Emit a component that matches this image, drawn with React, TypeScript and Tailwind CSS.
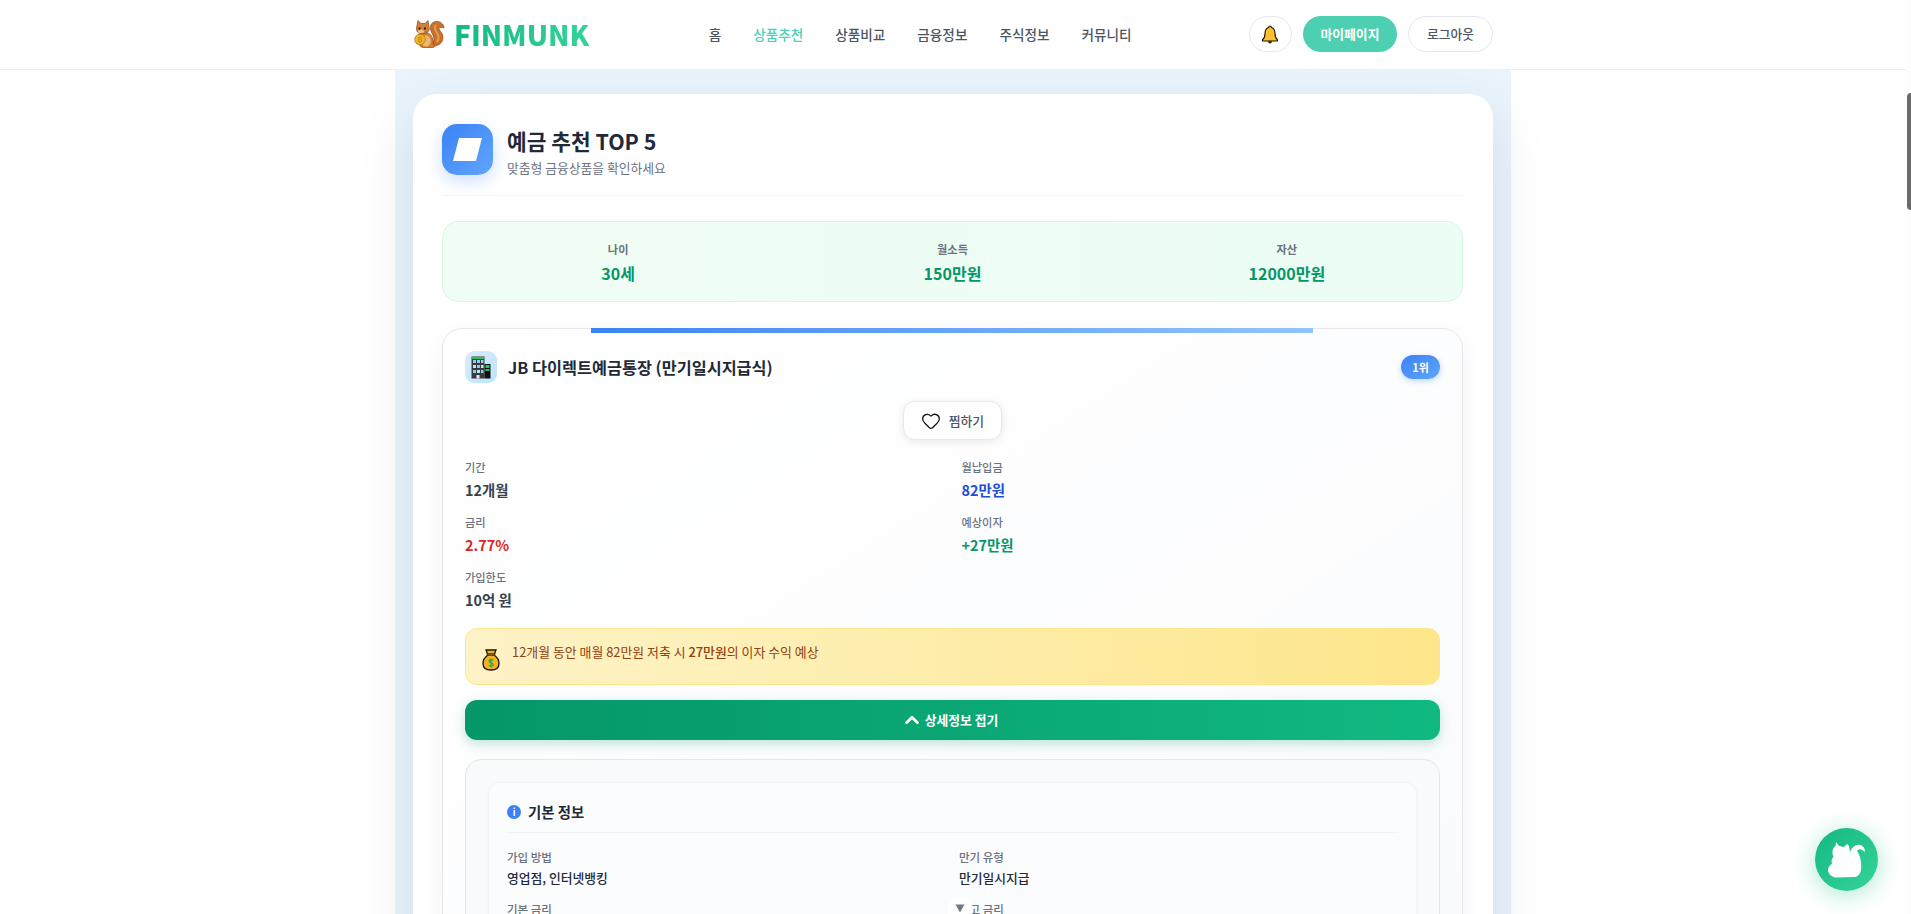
import React from "react";
import { ChevronUp, Heart } from "lucide-react";

function Squirrel() {
  return (
    <svg width="32" height="30" viewBox="0 0 32 30" className="shrink-0">
      <path d="M17 27C24 28 30 25 30 18C30 14 27 13 26 10C25.500 8 28 8 31 9C31 5 27 2 23 2.500C18 3 16 8 18 12C19 15 21 17 21 20C21 23 19 24 17 27Z" fill="#c9702b" stroke="#8a4a1a" strokeWidth="0.7" />
      <path d="M23 6C21 8 22 11 24 14C26 17 26 20 24 23" fill="none" stroke="#e59a55" strokeWidth="2" />
      <path d="M5 1.500L8 4.500H12L15 1.500L16 8C17 12 14 15 10 15C6 15 3 13 3.500 9Z" fill="#d07f38" stroke="#8a4a1a" strokeWidth="0.7" />
      <ellipse cx="8" cy="12.500" rx="3" ry="2" fill="#f0c08a" />
      <path d="M6 15C4 19 5 28 10 28.500H20C22 28.500 22 26 20 25C21 20 18 14 14 14Z" fill="#d58238" stroke="#8a4a1a" strokeWidth="0.7" />
      <ellipse cx="13" cy="22" rx="4.500" ry="5.500" fill="#efb67a" />
      <ellipse cx="6.500" cy="9.500" rx="1" ry="1.200" fill="#2d1a0c" />
      <ellipse cx="12" cy="9.500" rx="1" ry="1.200" fill="#2d1a0c" />
      <circle cx="7" cy="20.500" r="5.300" fill="#f0b429" stroke="#b97a10" strokeWidth="0.8" />
      <path d="M6 18V23M6 18H8C9 18 9 20.500 7.500 20.500C9.200 20.500 9.200 23 7.500 23H6" fill="none" stroke="#b97a10" strokeWidth="0.8" />
    </svg>
  );
}

function Bell() {
  return (
    <svg width="18" height="19" viewBox="0 0 18 19">
      <path d="M9 1C10 1 10.300 1.800 10.400 2.500C13 3.300 14 5.500 14 8.500C14 11.500 14.800 13.500 16.500 14.800V16H1.500V14.800C3.200 13.500 4 11.500 4 8.500C4 5.500 5 3.300 7.600 2.500C7.700 1.800 8 1 9 1Z" fill="#fdbf2d" stroke="#1c1300" strokeWidth="1.100" />
      <path d="M7 16.300C7.300 18 8.200 18.500 9 18.500C9.800 18.500 10.700 18 11 16.300Z" fill="#1c1300" />
    </svg>
  );
}

function Building() {
  return (
    <svg width="20" height="23" viewBox="0 0 20 23">
      <rect x="0.500" y="0.500" width="13" height="22" fill="#3a3a3a" />
      <rect x="1" y="1" width="12" height="2" fill="#22c55e" />
      <rect x="13.500" y="8" width="6" height="14.500" fill="#111" />
      <rect x="14.500" y="9" width="4" height="3" fill="#22c55e" />
      <rect x="14.500" y="13" width="4" height="2" fill="#22c55e" />
      <rect x="2" y="4" width="3" height="3" fill="#7dd3fc" />
      <rect x="6" y="4" width="3" height="3" fill="#7dd3fc" />
      <rect x="10" y="4" width="2.500" height="3" fill="#7dd3fc" />
      <rect x="2" y="9" width="3" height="3" fill="#bae6fd" />
      <rect x="6" y="9" width="3" height="3" fill="#7dd3fc" />
      <rect x="10" y="9" width="2.500" height="3" fill="#bae6fd" />
      <rect x="2" y="14" width="3" height="3" fill="#7dd3fc" />
      <rect x="6" y="14" width="3" height="3" fill="#bae6fd" />
      <rect x="10" y="14" width="2.500" height="3" fill="#7dd3fc" />
      <rect x="5.500" y="19" width="3" height="3.500" fill="#e5e7eb" />
    </svg>
  );
}

function MoneyBag() {
  return (
    <svg width="18" height="22" viewBox="0 0 18 22" className="shrink-0 mt-[7px]">
      <path d="M4 1H14L12 6C15 8 17 11 17 14.500C17 19 13.500 21 9 21C4.500 21 1 19 1 14.500C1 11 3 8 6 6Z" fill="#f0b429" stroke="#1c1300" strokeWidth="1.300" />
      <rect x="5" y="4.500" width="8" height="2" fill="#8a5a00" stroke="#1c1300" strokeWidth="0.500" />
      <path d="M11.300 11.300C10.800 10.500 7 10 7 12.200C7 14.300 11.300 13.500 11.300 15.700C11.300 17.700 7.500 17.400 6.800 16.300M9 9.500V18.500" fill="none" stroke="#16a34a" strokeWidth="1.100" />
    </svg>
  );
}

function ChatSquirrel() {
  return (
    <svg width="38" height="36" viewBox="0 0 38 36">
      <path d="M8 0L11 4L16 5L19 2L21 4L22 10C24 5 28 2 32 3C35 3.500 37 6 37 10L34 8C32 6.500 30 7.500 29 9C31 12 33 16 33 22C34 28 32 34 27 35L8 35.500C3 35 0 31 0 28C0 25 2 23 4 21.500C3 19 4 16 5.500 15C3.500 10 4.500 6 7.500 4Z" fill="#fff" />
    </svg>
  );
}

function Label({ children }: { children: React.ReactNode }) {
  return <div className="h-4 text-[11.2px] leading-4 font-medium text-[#6b7280]">{children}</div>;
}

function Stat({ label, value }: { label: string; value: string }) {
  return (
    <div className="flex flex-col items-center pt-[2px]">
      <div className="h-4 text-[11.2px] leading-4 font-semibold text-[#6b7280]">{label}</div>
      <div className="mt-[4px] h-[24px] text-[16px] leading-[24px] font-bold text-[#059669]">{value}</div>
    </div>
  );
}

function Info({ label, value, color }: { label: string; value: string; color: string }) {
  return (
    <div>
      <Label>{label}</Label>
      <div className={`mt-1 h-[22px] text-[14.4px] leading-[22px] font-semibold ${color}`}>{value}</div>
    </div>
  );
}

function Detail({ label, value }: { label: string; value: string }) {
  return (
    <div>
      <div className="h-4 text-[11.5px] leading-4 font-medium text-[#6b7280]">{label}</div>
      <div className="mt-[3px] h-5 text-[12.8px] leading-5 font-medium text-[#1f2937]">{value}</div>
    </div>
  );
}

const nav = ["홈", "상품추천", "상품비교", "금융정보", "주식정보", "커뮤니티"];

export default function App() {
  return (
    <div className="relative flex h-[914px] overflow-hidden bg-white font-['Noto_Sans_CJK_KR','Noto_Sans',sans-serif]">
      <div className="flex min-w-0 flex-1 flex-col">
        <header className="relative z-10 flex h-[70px] shrink-0 justify-center border-b border-[#eeeeee] bg-white pb-px">
          <div className="flex w-[1080px] items-center justify-between">
            <div className="flex items-center gap-[9px]">
              <Squirrel />
              <span className="bg-gradient-to-r from-[#10b981] to-[#34d399] bg-clip-text text-[28px] leading-8 font-extrabold text-transparent">FINMUNK</span>
            </div>
            <nav className="flex gap-8 pl-[2px]">
              {nav.map((n) => (
                <span key={n} className={`text-[13.6px] font-medium ${n === "상품추천" ? "text-[#4dd0b1]" : "text-[#4b5563]"}`}>{n}</span>
              ))}
            </nav>
            <div className="flex items-center gap-[11px]">
              <div className="flex h-9 w-[43px] items-center justify-center rounded-[18px] border border-[#e5e7eb] bg-white"><Bell /></div>
              <div className="flex h-9 w-[94px] items-center justify-center rounded-[18px] bg-[#4dd0b1] text-[12.8px] font-semibold text-white">마이페이지</div>
              <div className="flex h-9 w-[85px] items-center justify-center rounded-[18px] border border-[#e5e7eb] bg-white text-[12.8px] font-medium text-[#4b5563]">로그아웃</div>
            </div>
          </div>
        </header>

        <main className="flex min-h-0 flex-1 justify-center">
          <div className="w-[1116px] bg-[#e9f4fd] px-[18px] pt-6">
            <section className="h-[900px] rounded-[24px] bg-white pl-[29px] pr-[30px] pt-[30px] shadow-[0_20px_60px_rgba(0,0,0,0.1)]">
              <div className="flex h-[72px] items-start gap-[14px] border-b border-[#f1f5f9] pb-5">
                <div className="flex h-[51px] w-[51px] shrink-0 items-center justify-center rounded-[15px] bg-gradient-to-br from-[#3b82f6] to-[#60a5fa] shadow-[0_6px_16px_rgba(59,130,246,0.25)]">
                  <svg width="29" height="23" viewBox="0 0 29 23"><polygon points="6,0 29,0 23,23 0,23" fill="#fff" /></svg>
                </div>
                <div className="pt-[3px]">
                  <div className="h-[28px] text-[21.4px] leading-[28px] font-bold text-[#1f2937]">예금 추천 TOP 5</div>
                  <div className="mt-[3px] text-[12.8px] leading-[19px] text-[#6b7280]">맞춤형 금융상품을 확인하세요</div>
                </div>
              </div>

              <div className="mt-[25px] grid h-[81px] grid-cols-3 items-center gap-8 rounded-2xl border border-[#d1fae5] bg-gradient-to-r from-[#f0fdf4] to-[#ecfdf5] px-6">
                <Stat label="나이" value="30세" />
                <Stat label="월소득" value="150만원" />
                <Stat label="자산" value="12000만원" />
              </div>

              <article className="relative mt-[26px] rounded-[20px] border border-[#e5e7eb] bg-gradient-to-br from-white to-[#fafbfd] px-[22px] pt-[22px] shadow-[0_6px_24px_rgba(15,23,42,0.05)]">
                <div className="absolute -top-px left-[148px] right-[149px] h-[5px] bg-gradient-to-r from-[#3b82f6] to-[#93c5fd]" />
                <div className="flex items-center justify-between">
                  <div className="flex items-center gap-[11px]">
                    <div className="flex h-8 w-8 items-center justify-center rounded-[9px] bg-gradient-to-br from-[#dbeafe] to-[#bae6fd]"><Building /></div>
                    <h2 className="text-[16.3px] font-semibold text-[#1f2937]">JB 다이렉트예금통장 (만기일시지급식)</h2>
                  </div>
                  <div className="flex h-6 w-[39px] items-center justify-center rounded-full bg-gradient-to-br from-[#3b82f6] to-[#60a5fa] text-[11px] font-bold text-white shadow-[0_2px_6px_rgba(59,130,246,0.3)]">1위</div>
                </div>

                <div className="mt-[18px] flex justify-center">
                  <div className="flex h-[39px] w-[99px] items-center justify-center gap-[8px] rounded-xl border border-[#e5e7eb] bg-white text-[12.8px] font-medium text-[#4b5563] shadow-[0_2px_8px_rgba(0,0,0,0.08)]">
                    <Heart size={20} strokeWidth={1.5} color="#111" />
                    찜하기
                  </div>
                </div>

                <div className="mt-[19px] grid grid-cols-2 gap-x-[18px] gap-y-[13px]">
                  <Info label="기간" value="12개월" color="text-[#374151]" />
                  <Info label="월납입금" value="82만원" color="text-[#1d4ed8]" />
                  <Info label="금리" value="2.77%" color="text-[#dc2626]" />
                  <Info label="예상이자" value="+27만원" color="text-[#059669]" />
                  <Info label="가입한도" value="10억 원" color="text-[#374151]" />
                </div>

                <div className="mt-[17px] flex h-[57px] items-start gap-[12px] rounded-xl border border-[#fde68a] bg-gradient-to-r from-[#fef3c7] to-[#fde68a] px-4 pt-[13px]">
                  <MoneyBag />
                  <p className="text-[12.9px] leading-5 text-[#92400e]">12개월 동안 매월 82만원 저축 시 <strong className="font-medium">27만원</strong>의 이자 수익 예상</p>
                </div>

                <div className="mt-[15px] flex h-10 items-center justify-center gap-[2px] rounded-xl bg-gradient-to-r from-[#059669] to-[#10b981] pr-[6px] text-[12.8px] font-semibold text-white shadow-[0_4px_12px_rgba(5,150,105,0.25)]">
                  <ChevronUp size={22} strokeWidth={3} />
                  상세정보 접기
                </div>

                <div className="mt-[19px] rounded-2xl border border-[#e2e8f0] bg-[#f8fafc] px-[22px] pt-[22px]">
                  <div className="rounded-xl border border-[#f1f5f9] bg-[#fbfcfe] px-[18px] pb-8 pt-[19px] shadow-[0_1px_4px_rgba(15,23,42,0.03)]">
                    <div className="flex h-5 items-center gap-[7px]">
                      <span className="flex h-[14px] w-[14px] items-center justify-center rounded-full bg-[#3b82f6] text-[9px] leading-none font-bold text-white">i</span>
                      <span className="text-[14.4px] font-bold text-[#1f2937]">기본 정보</span>
                    </div>
                    <div className="mt-[10px] mb-4 h-px bg-[#f1f5f9]" />
                    <div className="grid grid-cols-2 gap-x-[13px] gap-y-[13px]">
                      <Detail label="가입 방법" value="영업점, 인터넷뱅킹" />
                      <Detail label="만기 유형" value="만기일시지급" />
                      <Detail label="기본 금리" value="2.27%" />
                      <Detail label="최고 금리" value="2.77%" />
                    </div>
                  </div>
                </div>
              </article>
            </section>
          </div>
        </main>
      </div>

      <div className="relative z-10 flex w-[5px] shrink-0 flex-col bg-[#fdfdfd]">
        <div className="mt-[93px] ml-px h-[117px] w-1 rounded-l-sm bg-[#6b6b6b]" />
      </div>

      <div className="absolute left-[947px] top-[897px] flex h-[26px] w-[26px] items-start justify-center rounded-full bg-white pt-[7px] shadow-[0_1px_3px_rgba(0,0,0,0.04)]">
        <svg width="10" height="9" viewBox="0 0 10 9"><path d="M0.500 0.500H9.500L7.500 4L5 8.500L2.500 4Z" fill="#737880" /></svg>
      </div>

      <div className="absolute left-[1815px] top-[828px] flex h-[63px] w-[63px] items-center justify-center rounded-full bg-gradient-to-br from-[#10b981] to-[#34d399] shadow-[0_4px_24px_rgba(16,185,129,0.35)]">
        <ChatSquirrel />
      </div>
    </div>
  );
}
